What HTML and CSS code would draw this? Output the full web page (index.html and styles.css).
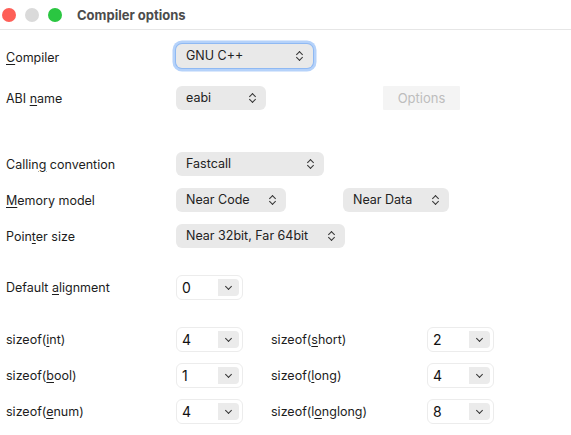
FILE: index.html
```html
<!DOCTYPE html>
<html lang="en">
<head>
    <meta charset="UTF-8">
    <meta name="viewport" content="width=device-width, initial-scale=1.0">
    <title>Compiler options</title>
    <link rel="stylesheet" href="styles.css">
</head>
<body>
    <div class="window">
        <div class="titlebar">
            <span class="light red"></span>
            <span class="light gray"></span>
            <span class="light green"></span>
            <span class="title">Compiler options</span>
        </div>

        <div class="form">
            <div class="row first">
                <label class="label low"><u>C</u>ompiler</label>
                <div class="combo focused w-compiler">GNU C++<span class="updown"></span></div>
            </div>

            <div class="row gap-s">
                <label class="label">ABI <u>n</u>ame</label>
                <div class="combo w-abi">eabi<span class="updown"></span></div>
                <button class="options-btn" disabled>Options</button>
            </div>

            <div class="row gap-l">
                <label class="label">Callin<u>g</u> convention</label>
                <div class="combo w-calling">Fastcall<span class="updown"></span></div>
            </div>

            <div class="row gap-xs">
                <label class="label"><u>M</u>emory model</label>
                <div class="combo w-code">Near Code<span class="updown"></span></div>
                <div class="combo w-data">Near Data<span class="updown"></span></div>
            </div>

            <div class="row gap-xs">
                <label class="label">Poin<u>t</u>er size</label>
                <div class="combo w-pointer">Near 32bit, Far 64bit<span class="updown"></span></div>
            </div>

            <div class="row tall gap-m">
                <label class="label">Default <u>a</u>lignment</label>
                <div class="spin">0<span class="drop"></span></div>
            </div>

            <div class="row tall gap-m">
                <label class="label">sizeof(<u>i</u>nt)</label>
                <div class="spin">4<span class="drop"></span></div>
                <label class="label label-right">sizeof(<u>s</u>hort)</label>
                <div class="spin">2<span class="drop"></span></div>
            </div>

            <div class="row tall gap-xs">
                <label class="label">sizeof(<u>b</u>ool)</label>
                <div class="spin">1<span class="drop"></span></div>
                <label class="label label-right">sizeof(<u>l</u>ong)</label>
                <div class="spin">4<span class="drop"></span></div>
            </div>

            <div class="row tall gap-xs">
                <label class="label">sizeof(<u>e</u>num)</label>
                <div class="spin">4<span class="drop"></span></div>
                <label class="label label-right">sizeof(l<u>o</u>nglong)</label>
                <div class="spin">8<span class="drop"></span></div>
            </div>
        </div>
    </div>
</body>
</html>
```

FILE: styles.css
```css
body {
    margin: 0;
    background-color: #ffffff;
    font-family: Inter, "Liberation Sans", sans-serif;
    font-size: 12.5px;
    color: #1d1d1d;
    overflow: hidden;
}
.titlebar {
    height: 29px;
    border-bottom: 1px solid #e6e6e6;
    display: flex;
    align-items: center;
    padding-left: 2px;
}
.light {
    width: 14px;
    height: 14px;
    border-radius: 50%;
    margin-right: 9px;
}
.red {
    background-color: #fe5f57;
}
.gray {
    background-color: #dadada;
}
.green {
    background-color: #2ac641;
}
.title {
    margin-left: 6px;
    font-size: 13px;
    font-weight: 700;
    color: #4c4c4c;
}
.form {
    padding-top: 14px;
    padding-left: 6px;
}
.row {
    display: flex;
    align-items: center;
    height: 24px;
}
.row.tall {
    height: 25px;
}
.gap-xs {
    margin-top: 12px;
}
.row.tall.gap-xs {
    margin-top: 11px;
}
.gap-s {
    margin-top: 18px;
}
.gap-m {
    margin-top: 27px;
}
.gap-l {
    margin-top: 42px;
}
.label {
    width: 170px;
    flex-shrink: 0;
}
.label.low {
    padding-top: 2px;
}
.label u {
    text-decoration-thickness: 1px;
    text-underline-offset: 2px;
}
.label-right {
    margin-left: 28px;
    width: 156px;
}
.combo {
    position: relative;
    box-sizing: border-box;
    height: 24px;
    line-height: 24px;
    padding-left: 10px;
    border-radius: 6px;
    background-color: #e9e9e9;
    color: #222;
}
.combo.focused {
    box-shadow: 0 0 0 1px #8fb9f3, 0 0 0 3.5px #b5d2fa;
}
.updown {
    position: absolute;
    right: 10px;
    top: 7px;
    width: 7px;
    height: 10px;
}
.updown::before,
.updown::after {
    content: "";
    position: absolute;
    left: 1px;
    width: 4px;
    height: 4px;
    border-left: 1.3px solid #333;
    border-top: 1.3px solid #333;
}
.updown::before {
    top: 1px;
    transform: rotate(45deg);
}
.updown::after {
    top: 4px;
    transform: rotate(-135deg);
}
.w-compiler {
    width: 137px;
}
.w-abi {
    width: 90px;
}
.w-calling {
    width: 148px;
}
.w-code {
    width: 110px;
}
.w-data {
    width: 106px;
    margin-left: 57px;
}
.w-pointer {
    width: 169px;
}
.options-btn {
    margin-left: 117px;
    width: 77px;
    height: 24px;
    border: none;
    border-radius: 1px;
    background-color: #f4f4f4;
    color: #bdbdbd;
    font-family: inherit;
    font-size: 13px;
    padding: 0;
}
.spin {
    position: relative;
    box-sizing: border-box;
    width: 67px;
    height: 25px;
    line-height: 23px;
    padding-left: 5px;
    border: 1px solid #ececec;
    border-radius: 6px;
    background-color: #fff;
    font-size: 14px;
    color: #111;
}
.drop {
    position: absolute;
    right: 3px;
    top: 3px;
    width: 21px;
    height: 17px;
    border-radius: 0 4px 4px 0;
    background-color: #ebebeb;
}
.drop::after {
    content: "";
    position: absolute;
    left: 8px;
    top: 5px;
    width: 4px;
    height: 4px;
    border-right: 1.4px solid #333;
    border-bottom: 1.4px solid #333;
    transform: rotate(45deg);
}
```
